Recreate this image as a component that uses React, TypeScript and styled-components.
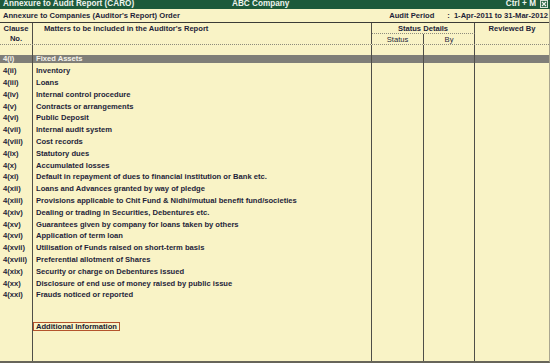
import styled, { createGlobalStyle } from 'styled-components';

const GlobalStyle = createGlobalStyle`
  html, body { margin: 0; padding: 0; background: #f9f3c6; }
`;

const COLS = '33px 339px 52px 51px 1fr';

const Screen = styled.div`
  width: 550px;
  height: 363px;
  display: flex;
  flex-direction: column;
  background: #f9f3c6;
  font-family: "Liberation Sans", Arial, sans-serif;
  font-weight: bold;
  font-size: 7.6px;
  color: #1f1f3a;
  overflow: hidden;
`;

const TitleBar = styled.div`
  height: 8.5px;
  line-height: 8.5px;
  background: #1d5a3b;
  color: #eef3ee;
  font-size: 8.2px;
  display: grid;
  grid-template-columns: 229px 1fr auto;
  padding: 0 2px 0 3px;
  overflow: hidden;
  white-space: nowrap;
`;

const Hotkey = styled.span`
  display: flex;
  align-items: center;
  gap: 4px;
`;

const Frame = styled.div`
  flex: 1;
  display: flex;
  flex-direction: column;
  border-right: 1px solid #aaa690;
  border-bottom: 2px solid #67655a;
`;

const SubHeader = styled.div`
  height: 13.5px;
  display: flex;
  align-items: center;
  justify-content: space-between;
  padding: 0 1px 0 3px;
  border-bottom: 1px solid #3b3b36;
  white-space: nowrap;
`;

const Period = styled.div`
  display: flex;
  align-items: center;
`;

const Colon = styled.span`
  margin: 0 4px 0 13px;
`;

const Header = styled.div`
  display: grid;
  grid-template-columns: ${COLS};
  grid-template-rows: 11px 10px;
  border-bottom: 1px dotted #8e8c7c;
`;

const HeadCell = styled.div<{ $col: string; $row: string; $under?: boolean; $weight?: string }>`
  grid-column: ${(p) => p.$col};
  grid-row: ${(p) => p.$row};
  border-right: 1px solid #4f4e48;
  border-bottom: ${(p) => (p.$under ? '1px dotted #8e8c7c' : 'none')};
  text-align: center;
  line-height: 10px;
  padding-top: 1px;
  font-weight: ${(p) => p.$weight ?? 'bold'};
  &:last-child { border-right: none; }
`;

const MattersHead = styled(HeadCell)`
  text-align: left;
  padding-left: 11px;
`;

const Body = styled.div`
  flex: 1;
  display: flex;
  flex-direction: column;
`;

const Row = styled.div<{ $selected?: boolean; $h?: string }>`
  display: grid;
  grid-template-columns: ${COLS};
  height: ${(p) => p.$h ?? '11.8px'};
  flex: ${(p) => (p.$h === 'fill' ? 1 : 'none')};
  line-height: 11.8px;
  white-space: nowrap;
  color: ${(p) => (p.$selected ? '#f4f2ea' : 'inherit')};
  background: ${(p) =>
    p.$selected
      ? 'linear-gradient(transparent 1.6px, #7f7e78 1.6px, #7f7e78 10.3px, transparent 10.3px)'
      : 'none'};
`;

const Cell = styled.div<{ $pad?: number }>`
  border-right: 1px solid #4f4e48;
  padding-left: ${(p) => p.$pad ?? 0}px;
  overflow: visible;
  &:last-child { border-right: none; }
`;

const AddInfo = styled.span`
  display: inline-block;
  margin: 20.5px 0 0 0;
  padding: 0 2px;
  height: 7px;
  line-height: 7px;
  border: 1px solid #b4532c;
  color: #1a1a30;
`;

const clauses: [string, string][] = [
  ['4(i)', 'Fixed Assets'],
  ['4(ii)', 'Inventory'],
  ['4(iii)', 'Loans'],
  ['4(iv)', 'Internal control procedure'],
  ['4(v)', 'Contracts or arrangements'],
  ['4(vi)', 'Public Deposit'],
  ['4(vii)', 'Internal audit system'],
  ['4(viii)', 'Cost records'],
  ['4(ix)', 'Statutory dues'],
  ['4(x)', 'Accumulated losses'],
  ['4(xi)', 'Default in repayment of dues to financial institution or Bank etc.'],
  ['4(xii)', 'Loans and Advances granted by way of pledge'],
  ['4(xiii)', 'Provisions applicable to Chit Fund & Nidhi/mutual benefit fund/societies'],
  ['4(xiv)', 'Dealing or trading in Securities, Debentures etc.'],
  ['4(xv)', 'Guarantees given by company for loans taken by others'],
  ['4(xvi)', 'Application of term loan'],
  ['4(xvii)', 'Utilisation of Funds raised on short-term basis'],
  ['4(xviii)', 'Preferential allotment of Shares'],
  ['4(xix)', 'Security or charge on Debentures issued'],
  ['4(xx)', 'Disclosure of end use of money raised by public issue'],
  ['4(xxi)', 'Frauds noticed or reported'],
];

function CloseIcon() {
  return (
    <svg width="8" height="8" viewBox="0 0 8 8">
      <rect x="0.5" y="0.5" width="7" height="7" fill="#2f6a4a" stroke="#d8e0d8" strokeWidth="1" />
      <path d="M2 2 L6 6 M6 2 L2 6" stroke="#eef3ee" strokeWidth="1.1" />
    </svg>
  );
}

export default function App() {
  return (
    <Screen>
      <GlobalStyle />
      <TitleBar>
        <span>Annexure to Audit Report (CARO)</span>
        <span>ABC Company</span>
        <Hotkey>
          Ctrl + M <CloseIcon />
        </Hotkey>
      </TitleBar>
      <Frame>
        <SubHeader>
          <span>Annexure to Companies (Auditor's Report) Order</span>
          <Period>
            <span>Audit Period</span>
            <Colon>:</Colon>
            <span>1-Apr-2011 to 31-Mar-2012</span>
          </Period>
        </SubHeader>
        <Header>
          <HeadCell $col="1" $row="1 / 3">
            Clause
            <br />
            No.
          </HeadCell>
          <MattersHead $col="2" $row="1 / 3">
            Matters to be included in the Auditor's Report
          </MattersHead>
          <HeadCell $col="3 / 5" $row="1" $under>
            Status Details
          </HeadCell>
          <HeadCell $col="3" $row="2" $weight="normal">
            Status
          </HeadCell>
          <HeadCell $col="4" $row="2" $weight="normal">
            By
          </HeadCell>
          <HeadCell $col="5" $row="1 / 3">
            Reviewed By
          </HeadCell>
        </Header>
        <Body>
          <Row $h="8.4px">
            <Cell />
            <Cell />
            <Cell />
            <Cell />
            <Cell />
          </Row>
          {clauses.map(([no, text], i) => (
            <Row key={no} $selected={i === 0}>
              <Cell $pad={3}>{no}</Cell>
              <Cell $pad={3}>{text}</Cell>
              <Cell />
              <Cell />
              <Cell />
            </Row>
          ))}
          <Row $h="fill">
            <Cell />
            <Cell>
              <AddInfo>Additional Information</AddInfo>
            </Cell>
            <Cell />
            <Cell />
            <Cell />
          </Row>
        </Body>
      </Frame>
    </Screen>
  );
}
